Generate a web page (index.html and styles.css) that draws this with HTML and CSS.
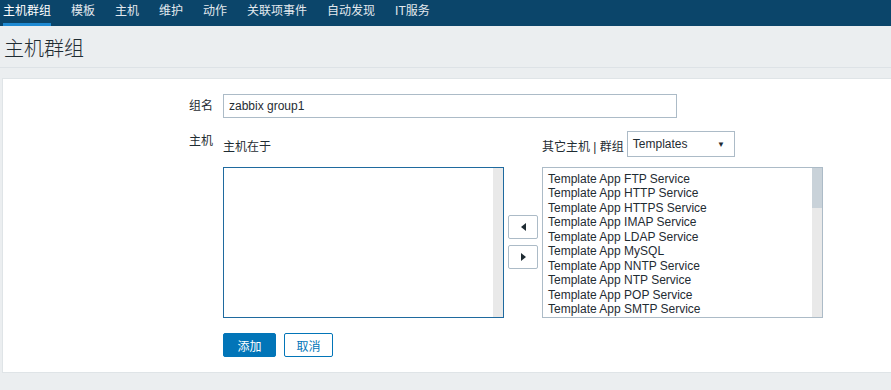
FILE: index.html
```html
<!DOCTYPE html>
<html lang="zh-CN">
<head>
  <meta charset="UTF-8" />
  <title>主机群组</title>
  <link rel="stylesheet" href="styles.css">
</head>
<body>
  <nav class="topnav">
    <a class="active">主机群组</a>
    <a>模板</a>
    <a>主机</a>
    <a>维护</a>
    <a>动作</a>
    <a>关联项事件</a>
    <a>自动发现</a>
    <a>IT服务</a>
  </nav>

  <header class="page-header">
    <h1>主机群组</h1>
  </header>

  <main class="card">
    <div class="form-row">
      <label class="form-label">组名</label>
      <div class="form-field">
        <input class="text-input" type="text" value="zabbix group1" />
      </div>
    </div>

    <div class="form-row hosts-row">
      <label class="form-label">主机</label>
      <div class="twin">
        <div class="twin-col">
          <div class="twin-head">主机在于</div>
          <div class="listbox focused">
            <div class="list-items"></div>
            <div class="scroll-track"></div>
          </div>
        </div>

        <div class="move-buttons">
          <button class="move-btn"><span class="tri-left"></span></button>
          <button class="move-btn"><span class="tri-right"></span></button>
        </div>

        <div class="twin-col">
          <div class="twin-head">
            其它主机 | 群组
            <div class="select">
              <span>Templates</span>
              <span class="select-arrow">&#9660;</span>
            </div>
          </div>
          <div class="listbox">
            <div class="list-items">
              <div>Template App FTP Service</div>
              <div>Template App HTTP Service</div>
              <div>Template App HTTPS Service</div>
              <div>Template App IMAP Service</div>
              <div>Template App LDAP Service</div>
              <div>Template App MySQL</div>
              <div>Template App NNTP Service</div>
              <div>Template App NTP Service</div>
              <div>Template App POP Service</div>
              <div>Template App SMTP Service</div>
            </div>
            <div class="scroll-track">
              <div class="scroll-thumb"></div>
            </div>
          </div>
        </div>
      </div>
    </div>

    <div class="form-row buttons-row">
      <div class="form-label"></div>
      <div class="actions">
        <button class="btn primary">添加</button>
        <button class="btn secondary">取消</button>
      </div>
    </div>
  </main>
</body>
</html>
```

FILE: styles.css
```css
* {
  margin: 0;
  padding: 0;
  box-sizing: border-box;
}

body {
  font-family: "Liberation Sans", Arial, "Noto Sans CJK SC", sans-serif;
  font-size: 12px;
  color: #1f2c33;
  background: #ebeef0;
  height: 390px;
  overflow: hidden;
}

.topnav {
  display: flex;
  height: 26px;
  background: #0b456a;
  padding-left: 3px;
}

.topnav a {
  color: #e3e9ee;
  font-size: 12px;
  line-height: 23px;
  margin-right: 20px;
  border-bottom: 3px solid transparent;
}

.topnav a.active {
  color: #fff;
  border-bottom-color: #1f8ad3;
}

.page-header {
  height: 42px;
  border-bottom: 1px solid #dde2e6;
  padding-left: 4px;
}

.page-header h1 {
  font-family: "Noto Sans CJK SC", sans-serif;
  font-weight: 300;
  font-size: 20px;
  line-height: 44px;
  color: #1f2c33;
}

.card {
  margin: 10px -2px 0 2px;
  background: #fff;
  border: 1px solid #dfe4e7;
  padding: 15px 0 15px 0;
  height: 295px;
}

.form-row {
  display: flex;
}

.form-label {
  width: 220px;
  text-align: right;
  padding-right: 10px;
  line-height: 24px;
  flex-shrink: 0;
}

.text-input {
  width: 454px;
  height: 24px;
  border: 1px solid #acbbc7;
  padding: 0 5px;
  font-family: inherit;
  font-size: 12px;
  color: #1f2c33;
}

.hosts-row {
  margin-top: 13px;
}

.hosts-row .form-label {
  line-height: 20px;
}

.twin {
  display: flex;
  align-items: flex-start;
}

.twin-col {
  width: 281px;
}

.twin-head {
  height: 26px;
  display: flex;
  align-items: center;
  margin-bottom: 10px;
  padding-top: 2px;
  white-space: nowrap;
}

.select {
  display: flex;
  justify-content: space-between;
  align-items: center;
  width: 108px;
  height: 26px;
  margin-left: 3px;
  margin-top: -2px;
  border: 1px solid #acbbc7;
  padding: 0 9px 0 5px;
}

.select-arrow {
  font-size: 8px;
}

.listbox {
  display: flex;
  height: 151px;
  border: 1px solid #acbbc7;
}

.listbox.focused {
  border-color: #1f6a9f;
}

.list-items {
  flex: 1;
  padding: 4px 0 0 5px;
  line-height: 14.45px;
  overflow: hidden;
}

.scroll-track {
  width: 10px;
  background: #e9e9e9;
}

.scroll-thumb {
  height: 40px;
  background: #c9d2d9;
}

.move-buttons {
  display: flex;
  flex-direction: column;
  gap: 6px;
  padding: 84px 4px 0 4px;
}

.move-btn {
  width: 30px;
  height: 24px;
  background: #fff;
  border: 1px solid #acbbc7;
  border-radius: 2px;
  display: flex;
  align-items: center;
  justify-content: center;
}

.tri-left {
  width: 0;
  height: 0;
  border-top: 4px solid transparent;
  border-bottom: 4px solid transparent;
  border-right: 5px solid #1f2c33;
}

.tri-right {
  width: 0;
  height: 0;
  border-top: 4px solid transparent;
  border-bottom: 4px solid transparent;
  border-left: 5px solid #1f2c33;
}

.buttons-row {
  margin-top: 15px;
}

.actions {
  display: flex;
  gap: 8px;
}

.btn {
  height: 24px;
  padding: 0;
  font-family: inherit;
  font-size: 12px;
  border-radius: 2px;
  border: 1px solid #0275b8;
  white-space: nowrap;
}

.btn.primary {
  background: #0275b8;
  color: #fff;
  width: 53px;
}

.btn.secondary {
  background: #fff;
  color: #0275b8;
  width: 49px;
}
```
